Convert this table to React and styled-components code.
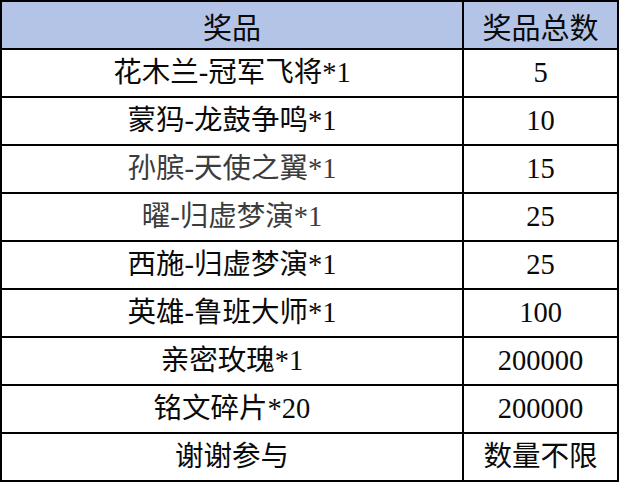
import React from "react";
import styled, { createGlobalStyle } from "styled-components";

const Global = createGlobalStyle`
  html, body { margin: 0; padding: 0; background: #ffffff; }
  #root { width: 620px; height: 482px; }
`;

const Table = styled.div`
  display: grid;
  grid-template-columns: 462px 155px;
  grid-auto-rows: 48px;
  width: 619px;
  border-top: 2px solid #000;
  border-left: 2px solid #000;
  box-sizing: border-box;
`;

const Cell = styled.div`
  display: flex;
  align-items: center;
  justify-content: center;
  box-sizing: border-box;
  border-right: 2px solid #000;
  border-bottom: 2px solid #000;
  background: ${(p) => (p.$head ? "#b4c4e6" : "#ffffff")};
  color: ${(p) => (p.$muted ? "#3c3c3c" : "#0a0a0a")};
  font-family: ${(p) =>
    p.$head
      ? '"Noto Sans CJK SC", sans-serif'
      : '"Liberation Serif", "Noto Sans CJK SC", serif'};
  font-size: ${(p) => (p.$head ? "29px" : "28.5px")};
  line-height: 1;
  padding-top: ${(p) => (p.$head ? "3px" : "1px")};
  white-space: nowrap;
`;

const rows = [
  ["花木兰-冠军飞将*1", "5"],
  ["蒙犸-龙鼓争鸣*1", "10"],
  ["孙膑-天使之翼*1", "15", true],
  ["曜-归虚梦演*1", "25", true],
  ["西施-归虚梦演*1", "25"],
  ["英雄-鲁班大师*1", "100"],
  ["亲密玫瑰*1", "200000"],
  ["铭文碎片*20", "200000"],
  ["谢谢参与", "数量不限"],
];

export default function App() {
  return (
    <>
      <Global />
      <Table>
        <Cell $head>奖品</Cell>
        <Cell $head>奖品总数</Cell>
        {rows.map(([name, count, muted]) => (
          <React.Fragment key={name}>
            <Cell $muted={muted}>{name}</Cell>
            <Cell>{count}</Cell>
          </React.Fragment>
        ))}
      </Table>
    </>
  );
}
